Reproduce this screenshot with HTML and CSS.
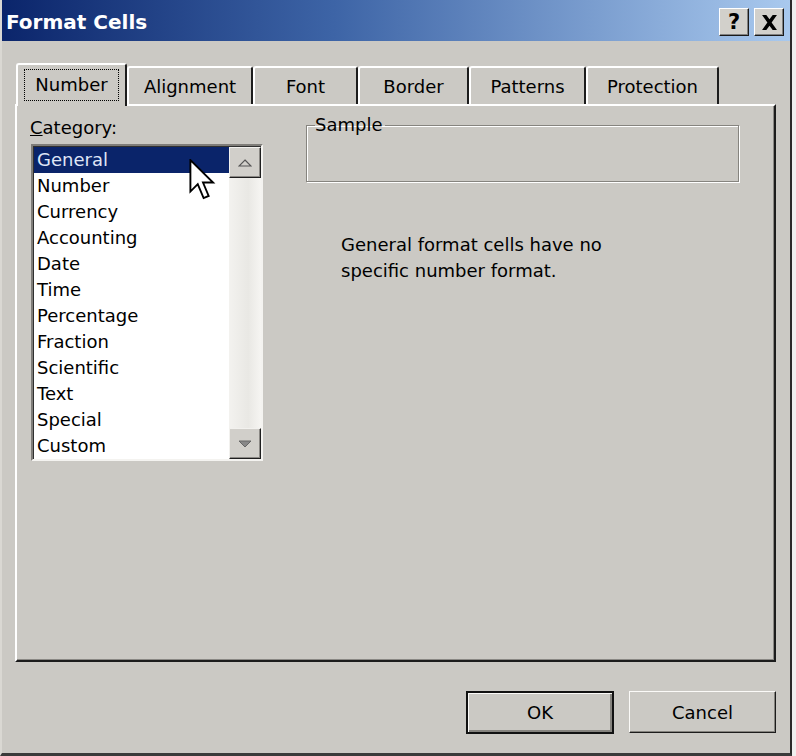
FILE: index.html
```html
<!DOCTYPE html>
<html>
<head>
<meta charset="utf-8">
<link rel="stylesheet" href="styles.css">
</head>
<body>
<div class="window">
  <div class="titlebar">
    <span class="title">Format Cells</span>
    <div class="tb-buttons">
      <span class="tb-btn help">?</span>
      <span class="tb-btn close"><svg width="17" height="15" viewBox="0 0 16 14"><path d="M1 0h4l3 4 3-4h4l-5 7 5 7h-4l-3-4-3 4H1l5-7z" fill="#000"/></svg></span>
    </div>
  </div>
  <div class="client">
    <div class="tabs">
      <div class="tab active w-number"><span class="focus">Number</span></div>
      <div class="tab w-align">Alignment</div>
      <div class="tab w-font">Font</div>
      <div class="tab w-border">Border</div>
      <div class="tab w-patterns">Patterns</div>
      <div class="tab w-protection">Protection</div>
    </div>
    <div class="panel">
      <div class="left">
        <div class="label"><u>C</u>ategory:</div>
        <div class="listbox">
          <ul class="items">
            <li class="selected">General</li>
            <li>Number</li>
            <li>Currency</li>
            <li>Accounting</li>
            <li>Date</li>
            <li>Time</li>
            <li>Percentage</li>
            <li>Fraction</li>
            <li>Scientific</li>
            <li>Text</li>
            <li>Special</li>
            <li>Custom</li>
          </ul>
          <div class="scrollbar">
            <div class="sb-btn"><svg width="14" height="8" viewBox="0 0 14 8"><path d="M7 1L13 7H1z" fill="none" stroke="#555" stroke-width="1.2"/></svg></div>
            <div class="sb-track"></div>
            <div class="sb-btn"><svg width="14" height="8" viewBox="0 0 14 8"><path d="M7 7L13 1H1z" fill="#888" stroke="#666" stroke-width="1"/></svg></div>
          </div>
        </div>
      </div>
      <div class="right">
        <fieldset class="sample"><legend>Sample</legend></fieldset>
        <p class="desc">General format cells have no<br>specific number format.</p>
      </div>
    </div>
    <div class="buttons">
      <button class="btn default">OK</button>
      <button class="btn">Cancel</button>
    </div>
  </div>
  <svg class="cursor" width="28" height="42" viewBox="0 0 13 20">
    <path d="M0.5 0.5V15.5L4 12L6.8 18.6L9.2 17.6L6.5 11.2H11.3Z" fill="#fff" stroke="#000" stroke-width="0.9" stroke-linejoin="miter"/>
  </svg>
</div>
</body>
</html>
```

FILE: styles.css
```css
html, body {
  margin: 0;
  padding: 0;
  background: #efefef;
}
body {
  font-family: "DejaVu Sans", Verdana, sans-serif;
  font-size: 18px;
  color: #000;
}
.window {
  position: relative;
  width: 788px;
  height: 753px;
  background: #cbc9c4;
  border-left: 2px solid #dad8d3;
  border-right: 2px solid #2a2a2a;
  border-bottom: 3px solid #3a3a3a;
  overflow: hidden;
}
.titlebar {
  height: 41px;
  background: linear-gradient(to right, #0b256b 0%, #3d64a6 42%, #a9c9ee 100%);
  display: flex;
  align-items: center;
  justify-content: space-between;
  padding: 0 6px 0 4px;
}
.title {
  color: #fff;
  font-weight: bold;
  font-size: 20px;
  margin-top: 3px;
}
.tb-buttons {
  display: flex;
  gap: 5px;
  margin-top: 3px;
}
.tb-btn {
  width: 30px;
  height: 28px;
  box-sizing: border-box;
  background: #d2d0cb;
  border: 1px solid;
  border-color: #fff #1a1a1a #1a1a1a #fff;
  box-shadow: inset -1px -1px #808080;
  display: flex;
  align-items: center;
  justify-content: center;
  font-weight: bold;
  font-size: 21px;
  line-height: 1;
}
.client {
  padding: 21px 0 0 13px;
}
.tabs {
  display: flex;
  align-items: flex-end;
  margin-left: 1px;
  height: 42px;
}
.tab {
  border-top: 2px solid #fff;
  border-left: 2px solid #fff;
  border-right: 2px solid #1c1c1c;
  border-top-left-radius: 3px;
  border-top-right-radius: 3px;
  display: flex;
  align-items: center;
  justify-content: center;
  font-size: 18px;
  background: #cbc9c4;
  position: relative;
  box-sizing: border-box;
  height: 38px;
}
.tab.active {
  height: 43px;
  z-index: 2;
  margin-bottom: -2px;
  padding-bottom: 4px;
}
.w-number { width: 111px; }
.w-align { width: 126px; }
.w-font { width: 105px; }
.w-border { width: 111px; }
.w-patterns { width: 117px; }
.w-protection { width: 133px; }
.focus {
  display: flex;
  align-items: center;
  justify-content: center;
  width: 93px;
  height: 30px;
  border: 1px dotted #000;
  margin-top: 2px;
}
.panel {
  width: 761px;
  height: 558px;
  box-sizing: border-box;
  border-top: 2px solid #fff;
  border-left: 2px solid #fff;
  border-right: 2px solid #1c1c1c;
  border-bottom: 2px solid #1c1c1c;
  box-shadow: inset -1px -1px #8a8884;
  padding: 11px 0 0 13px;
  display: grid;
  grid-template-columns: 233px 433px;
  column-gap: 43px;
  align-items: start;
}
.label {
  line-height: 22px;
  height: 22px;
}
.listbox {
  margin: 5px 0 0 1px;
  width: 232px;
  height: 317px;
  box-sizing: border-box;
  border: 2px solid;
  border-color: #7f7d79 #f4f3f0 #f4f3f0 #7f7d79;
  box-shadow: inset 1px 1px #303030;
  background: #fff;
  display: flex;
  padding: 1px 0 0 1px;
}
.items {
  list-style: none;
  margin: 0;
  padding: 0;
  flex: 1;
}
.items li {
  height: 26px;
  line-height: 26px;
  padding-left: 3px;
}
.items li.selected {
  background: #0a246a;
  color: #dfe6f6;
}
.scrollbar {
  width: 32px;
  display: flex;
  flex-direction: column;
  background: linear-gradient(to right, #f3f2ef, #e9e8e4 60%, #f6f5f2);
}
.sb-btn {
  height: 31px;
  box-sizing: border-box;
  background: #d1cfca;
  border: 1px solid;
  border-color: #f2f1ee #1e1e1e #1e1e1e #f2f1ee;
  box-shadow: inset -1px -1px #8a8884;
  display: flex;
  align-items: center;
  justify-content: center;
}
.sb-track {
  flex: 1;
}
.right {
  margin-top: -3px;
}
.sample {
  margin: 0;
  padding: 0;
  width: 433px;
  height: 68px;
  box-sizing: border-box;
  border: 1px solid #86847f;
  box-shadow: inset 1px 1px #fff, 1px 1px #fff;
}
.sample legend {
  padding: 0 2px 0 0;
  margin-left: 8px;
  line-height: 22px;
}
.desc {
  margin: 50px 0 0 35px;
  line-height: 26px;
}
.buttons {
  display: flex;
  justify-content: flex-end;
  gap: 15px;
  width: 761px;
  margin-top: 29px;
}
.btn {
  font-family: "DejaVu Sans", Verdana, sans-serif;
  font-size: 18px;
  color: #000;
  width: 147px;
  height: 42px;
  background: #cbc9c4;
  border: 1px solid;
  border-color: #fbfaf8 #1c1c1c #1c1c1c #fbfaf8;
  box-shadow: inset -1px -1px #85837e;
  padding: 0;
}
.btn.default {
  width: 148px;
  height: 43px;
  border: 2px solid #111;
  box-shadow: inset 1px 1px #fbfaf8, inset -2px -2px #85837e;
}
.cursor {
  position: absolute;
  left: 187px;
  top: 159px;
}
```
